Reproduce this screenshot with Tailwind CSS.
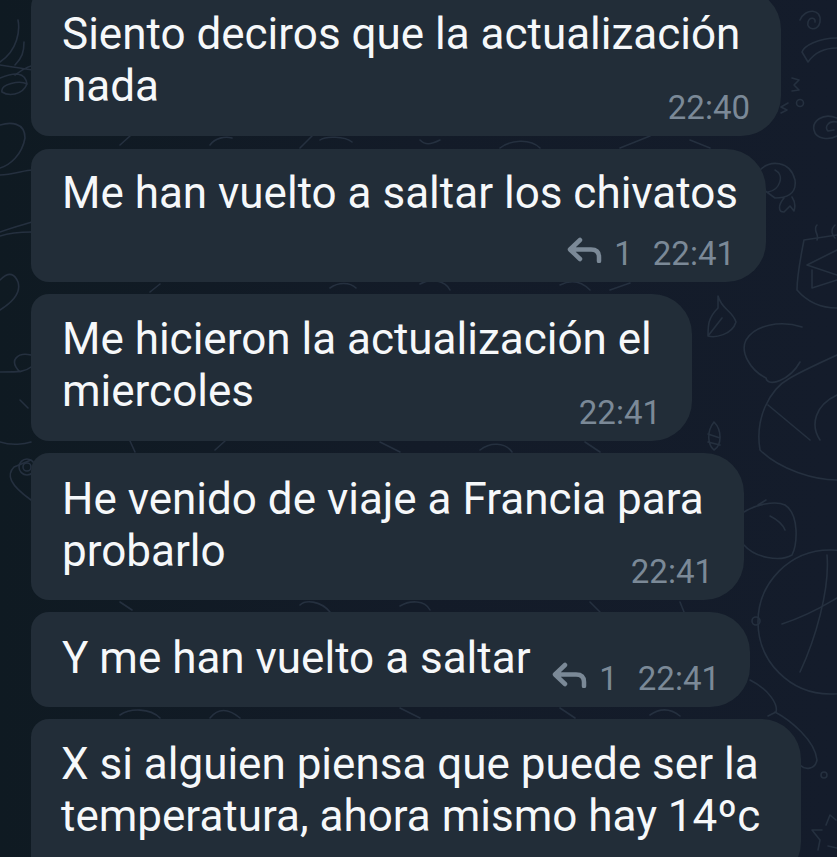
<!DOCTYPE html>
<html><head><meta charset="utf-8"><script src="https://cdn.jsdelivr.net/npm/@tailwindcss/browser@4"></script></head>
<body class="m-0">
<div class="relative w-[837px] h-[857px] overflow-hidden bg-gradient-to-r from-[#0f1a22] via-[#131b28] to-[#141c2b] font-['Roboto',sans-serif]">
<svg class="absolute inset-0" width="837" height="857" viewBox="0 0 837 857" fill="none" stroke="#25303f" stroke-width="1.6" stroke-linecap="round" stroke-linejoin="round">
<path d="M800 20 C805 8 822 8 820 22 C818 32 806 30 808 22 C810 16 816 18 815 22"/>
<path d="M837 38 C818 38 804 46 802 52 L808 62 C815 52 825 48 837 48"/>
<path d="M792 78 L799 80 L794 85 L799 90 L792 91 M788 103 L781 107 L787 110 L781 113"/><circle cx="800" cy="103" r="3.5"/>
<path d="M837 118 C822 112 812 122 814 130 C816 140 830 140 837 136 M837 122 C828 120 824 128 828 131 L834 130"/>
<path d="M760 170 C770 160 790 160 795 180 C797 195 785 198 775 198 L764 190 M775 170 C785 175 780 190 768 192 M784 198 C778 205 778 212 784 212 L790 206 L794 211 C796 205 794 200 792 197"/>
<path d="M817 225 C812 230 820 235 817 240 M835 225 C830 230 832 235 835 238"/>
<path d="M804 240 L837 235 M804 240 C800 260 797 275 797 290 C810 305 825 308 837 308 M807 265 L837 275 M807 265 L837 250 M812 270 L812 288 L837 280"/>
<path d="M718 296 C722 310 732 310 736 322 C732 335 715 338 708 336 C708 325 708 318 718 308 Z M708 336 L722 318"/>
<path d="M802 327 C780 320 755 325 746 340 C740 352 750 370 766 378 C768 388 790 380 800 362 M837 355 C815 365 800 372 790 378 C768 390 755 420 760 450 C780 470 815 480 837 480 M768 405 L810 440 M837 395 C815 405 810 425 820 440"/>
<path d="M714 422 C706 432 708 445 714 450 C722 445 722 430 714 422 M708 434 L720 438 M708 442 L720 445"/>
<path d="M744 512 C755 505 775 500 785 505 C800 515 797 545 792 555 C780 562 755 558 744 545 M766 500 L758 505 M770 516 C778 520 783 525 785 530"/>
<circle cx="830" cy="622" r="72"/><path d="M782 624 C810 615 825 605 837 598 M827 555 C830 590 815 640 800 672"/><circle cx="756" cy="621" r="4"/><circle cx="824" cy="775" r="3"/>
<path d="M750 680 C770 690 778 705 776 712 L768 716 M775 712 C790 720 815 740 817 760 C815 770 805 770 800 765"/>
<path d="M826 825 L830 815 L836 820 M822 830 L812 830 L820 840 L818 850 M837 848 L828 846"/>
<path d="M0 62 C18 50 20 30 18 20 M15 65 C22 58 24 52 24 42 M0 65 C20 68 35 72 60 70 M0 78 C15 72 25 72 27 84 C22 96 8 96 2 92 C0 84 20 80 27 84 M15 75 C25 68 30 65 38 65"/>
<path d="M0 125 C10 122 25 122 25 138 C22 155 10 165 0 168 M0 175 C12 175 25 170 32 170"/>
<path d="M0 232 C10 228 22 225 32 222 M0 236 C12 232 25 232 32 232"/>
<path d="M0 280 C10 270 15 275 18 282 C22 295 8 305 0 310"/>
<path d="M0 372 C20 372 25 372 31 367 M20 372 C8 360 18 352 31 355 M20 400 L28 408"/>
<path d="M0 442 C12 446 25 444 31 442"/>
<path d="M31 460 L14 467 C6 475 10 485 31 500"/><circle cx="27" cy="467" r="8"/><circle cx="27" cy="467" r="4"/>
<path d="M150 292 L160 284 M330 288 C338 282 350 282 356 288 M420 284 C430 278 445 280 450 290 M560 285 C570 280 580 280 590 290 M610 290 L630 283"/>
<path d="M120 145 L130 136 M210 145 C215 138 225 136 232 138 M300 148 L312 136 M320 140 C325 136 345 136 352 142 M420 140 C425 145 430 145 440 140 M500 148 C510 140 530 138 540 148 M620 148 L650 136 M690 140 L710 148"/>
<path d="M130 441 L135 452 M215 450 L225 441 M380 442 L400 452 M480 450 C490 442 505 442 512 452 M585 442 L600 452"/>
<path d="M120 602 L132 610 M300 605 C305 600 320 600 330 612 M400 606 C410 600 425 600 430 610 M590 602 L600 612 M680 602 L684 612"/>
<path d="M210 718 C218 708 228 708 240 718 M120 715 C130 708 150 708 160 718 M400 708 L420 718 M560 708 L575 718 M650 715 C660 708 670 708 680 716"/>
</svg>
<div class="relative flex flex-col items-start gap-3 pl-[31px] mt-[-11px]">
<div class="w-[750px] mb-px rounded-l-[18px] rounded-r-[40px] bg-[#222d38] pl-[31px] pr-[31px] pt-[19px] pb-[10px]">
<p class="text-[44px] leading-[52px] text-[#f6f8fa] whitespace-nowrap">Siento deciros que la actualización<br>nada</p>
<div class="mt-[-22px] flex justify-end items-center text-[33px] leading-[36px] text-[#7b8997]">22:40</div>
</div>
<div class="w-[735px] rounded-l-[18px] rounded-r-[40px] bg-[#222d38] pl-[31px] pr-[31px] pt-[18px] pb-[10px]">
<p class="text-[44px] leading-[52px] text-[#f6f8fa] whitespace-nowrap">Me han vuelto a saltar los chivatos</p>
<div class="mt-[17px] flex justify-end items-center text-[33px] leading-[36px] text-[#7b8997]">
<svg class="w-[35px] h-[26px] mr-[12px] mb-[8px]" viewBox="0 0 35 26" fill="none" stroke="#7b8997" stroke-width="4.5" stroke-linecap="round" stroke-linejoin="round"><path d="M13 3 L3 12.5 L13 22 M3 12.5 H24 Q32 12.5 32 20 V24"/></svg>
<span>1</span><span class="ml-[20px]">22:41</span></div>
</div>
<div class="w-[661px] rounded-l-[18px] rounded-r-[40px] bg-[#222d38] pl-[31px] pr-[31px] pt-[19px] pb-[10px]">
<p class="text-[44px] leading-[52px] text-[#f6f8fa] whitespace-nowrap">Me hicieron la actualización el<br>miercoles</p>
<div class="mt-[-22px] flex justify-end items-center text-[33px] leading-[36px] text-[#7b8997]">22:41</div>
</div>
<div class="w-[713px] rounded-l-[18px] rounded-r-[40px] bg-[#222d38] pl-[31px] pr-[31px] pt-[20px] pb-[10px]">
<p class="text-[44px] leading-[52px] text-[#f6f8fa] whitespace-nowrap">He venido de viaje a Francia para<br>probarlo</p>
<div class="mt-[-23px] flex justify-end items-center text-[33px] leading-[36px] text-[#7b8997]">22:41</div>
</div>
<div class="w-[719px] rounded-l-[18px] rounded-r-[40px] bg-[#222d38] pl-[31px] pr-[30px] pt-[20px] pb-[10px]">
<p class="text-[44px] leading-[52px] text-[#f6f8fa] whitespace-nowrap">Y me han vuelto a saltar</p>
<div class="mt-[-23px] flex justify-end items-center text-[33px] leading-[36px] text-[#7b8997]">
<svg class="w-[35px] h-[26px] mr-[12px] mb-[8px]" viewBox="0 0 35 26" fill="none" stroke="#7b8997" stroke-width="4.5" stroke-linecap="round" stroke-linejoin="round"><path d="M13 3 L3 12.5 L13 22 M3 12.5 H24 Q32 12.5 32 20 V24"/></svg>
<span>1</span><span class="ml-[20px]">22:41</span></div>
</div>
<div class="w-[770px] rounded-l-[18px] rounded-r-[40px] bg-[#222d38] pl-[30px] pr-8 pt-[19px] pb-[40px]">
<p class="text-[44px] leading-[52px] text-[#f6f8fa] whitespace-nowrap">X si alguien piensa que puede ser la<br>temperatura, ahora mismo hay 14ºc</p>
</div>
</div>
</div>
</body></html>
